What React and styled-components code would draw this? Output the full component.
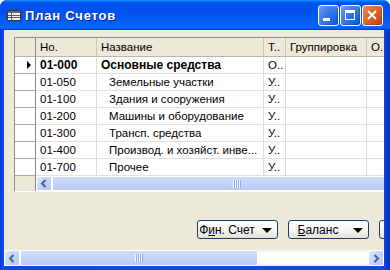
import React from 'react';
import styled, { createGlobalStyle } from 'styled-components';

const GlobalStyle = createGlobalStyle`
  html, body { margin: 0; padding: 0; overflow: hidden; background: #ffffff; }
  body { font-family: "Liberation Sans", Arial, sans-serif; }
  #root { width: 390px; height: 270px; }
`;

const Window = styled.div`
  width: 390px;
  height: 270px;
  box-sizing: border-box;
  display: flex;
  flex-direction: column;
  padding-bottom: 4px;
  background: linear-gradient(90deg, #0831d9 0px, #0a4be8 2px, #0a4ee8 380px, #0841d8 386px, #062fb8 390px);
  border-radius: 7px 7px 0 0;
  overflow: hidden;
`;

const TitleBar = styled.div`
  height: 30px;
  flex: none;
  display: flex;
  align-items: center;
  padding: 0 7px 0 7px;
  box-sizing: border-box;
  background: linear-gradient(180deg, #0997ff 0%, #0053ee 9%, #0050ee 40%, #0663f6 86%, #0666f8 92%, #005bff 95%, #003dd7 97%, #003dd7 100%);
  color: #ffffff;
`;

const TitleIcon = styled.svg`
  width: 14px;
  height: 11px;
  flex: none;
  margin-top: 1px;
`;

const TitleText = styled.div`
  margin-left: 4px;
  font-family: "Liberation Sans", Arial, sans-serif;
  font-weight: bold;
  font-size: 13px;
  letter-spacing: 0.8px;
  text-shadow: 1px 1px 0 #0a1f8a;
  flex: 1;
`;

const Controls = styled.div`
  display: flex;
  gap: 1px;
  align-self: flex-start;
  margin-top: 5px;
`;

const CtlButton = styled.div`
  width: 21px;
  height: 21px;
  box-sizing: border-box;
  border: 1px solid #ffffff;
  border-radius: 3px;
  display: flex;
  align-items: center;
  justify-content: center;
  background: ${p => p.$close
    ? 'radial-gradient(circle at 90% 90%, #cc4616 0%, #dc6527 55%, #e5906c 100%)'
    : 'radial-gradient(circle at 90% 90%, #0a5cf0 0%, #3a78ea 55%, #6aa0fb 100%)'};
  box-shadow: inset -1px -1px 1px rgba(0,0,0,0.2);
`;

const Body = styled.div`
  flex: 1;
  min-height: 0;
  margin: 0 6px 0 4px;
  background: #ece9d8;
  display: flex;
  flex-direction: column;
  overflow: hidden;
`;

const Form = styled.div`
  flex: 1;
  min-height: 0;
  padding: 7px 0 0 10px;
  overflow: hidden;
  display: flex;
  flex-direction: column;
`;

const Grid = styled.div`
  flex: none;
  width: 398px;
  border-top: 1px solid #8e8d88;
  border-left: 1px solid #8e8d88;
  border-bottom: 1px solid #ffffff;
  background: #ece9d8;
  font-size: 11.5px;
  color: #000;
`;

const COLS = '21px 61px 167px 22px 81px 45px';

const Row = styled.div`
  display: grid;
  grid-template-columns: ${COLS};
  height: ${p => (p.$header ? 19 : 17)}px;
`;

const Cell = styled.div`
  box-sizing: border-box;
  padding-left: ${p => 4 + (p.$indent || 0)}px;
  border-right: 1px solid ${p => (p.$header ? '#cbc7b8' : '#dedcd3')};
  border-bottom: 1px solid ${p => (p.$header ? '#b9b6a8' : '#e2e0d8')};
  background: ${p => (p.$header ? '#ece9d8' : '#ffffff')};
  font-weight: ${p => (p.$bold ? 'bold' : 'normal')};
  font-size: ${p => (p.$bold ? 12 : 11.5)}px;
  line-height: ${p => (p.$header ? 18 : 16)}px;
  white-space: nowrap;
  overflow: hidden;
`;

const Selector = styled.div`
  box-sizing: border-box;
  background: ${p => (p.$header ? '#ece9d8' : '#ffffff')};
  border-right: 1px solid #8a8985;
  border-bottom: 1px solid ${p => (p.$header ? '#b9b6a8' : '#a9a8a3')};
  display: flex;
  align-items: center;
  justify-content: flex-end;
  padding-right: 4px;
`;

const Pointer = styled.div`
  width: 0;
  height: 0;
  border-top: 4px solid transparent;
  border-bottom: 4px solid transparent;
  border-left: 4px solid #000;
`;

const GridScroll = styled.div`
  display: grid;
  grid-template-columns: 21px 1fr;
  height: 15px;
`;

const Corner = styled.div`
  background: #ece9d8;
  border-right: 1px solid #8a8985;
`;

const ScrollBar = styled.div`
  display: flex;
  height: ${p => p.$h}px;
  background: linear-gradient(180deg, #f3f1ec 0%, #fefefb 20%, #fefefb 80%, #f0eee5 100%);
  overflow: hidden;
  flex: none;
`;

const Arrow = styled.div`
  width: ${p => p.$w}px;
  flex: none;
  box-sizing: border-box;
  border: 1px solid #ffffff;
  border-radius: 2px;
  background: linear-gradient(135deg, #dfe8fe 0%, #c4d5fd 50%, #b3c8f5 100%);
  display: flex;
  align-items: center;
  justify-content: center;
`;

const Thumb = styled.div`
  width: ${p => p.$w}px;
  flex: none;
  box-sizing: border-box;
  border: 1px solid #ffffff;
  border-radius: 2px;
  background: linear-gradient(180deg, #cddbfd 0%, #c5d5fc 50%, #b8cbf6 100%);
  display: flex;
  align-items: center;
  justify-content: center;
`;

const Grip = styled.div`
  width: 8px;
  height: 8px;
  background: repeating-linear-gradient(90deg, #eef3fe 0px, #eef3fe 1px, #8fadec 1px, #8fadec 2px);
`;

const Track = styled.div`
  flex: 1;
`;

const ButtonRow = styled.div`
  display: flex;
  gap: 10px;
  margin: 28px 0 0 183px;
`;

const DropButton = styled.div`
  flex: none;
  width: 81px;
  height: 19px;
  box-sizing: border-box;
  border: 1px solid #1c3f73;
  border-radius: 3px;
  background: linear-gradient(180deg, #ffffff 0%, #f4f3ee 60%, #e3e0d4 100%);
  display: flex;
  align-items: center;
  font-size: 12px;
  color: #000;
`;

const ButtonLabel = styled.div`
  flex: 1;
  text-align: center;
  line-height: 16px;
  white-space: nowrap;
  u { text-decoration: underline; text-underline-offset: 1px; }
`;

const DropArrow = styled.div`
  width: 0;
  height: 0;
  margin: 2px 5px 0 6px;
  border-left: 5px solid transparent;
  border-right: 5px solid transparent;
  border-top: 5px solid #000;
`;

const Chevron = ({ dir }) => (
  <svg width="8" height="9" viewBox="0 0 8 9">
    {dir === 'left'
      ? <path d="M5.5 1 L2 4.5 L5.5 8" fill="none" stroke="#4d6185" strokeWidth="2" />
      : <path d="M2.5 1 L6 4.5 L2.5 8" fill="none" stroke="#4d6185" strokeWidth="2" />}
  </svg>
);

const rows = [
  { no: '01-000', name: 'Основные средства', t: 'О..', bold: true, current: true },
  { no: '01-050', name: 'Земельные участки', t: 'У..', indent: 8 },
  { no: '01-100', name: 'Здания и сооружения', t: 'У..', indent: 8 },
  { no: '01-200', name: 'Машины и оборудование', t: 'У..', indent: 8 },
  { no: '01-300', name: 'Трансп. средства', t: 'У..', indent: 8 },
  { no: '01-400', name: 'Производ. и хозяйст. инве...', t: 'У..', indent: 8 },
  { no: '01-700', name: 'Прочее', t: 'У..', indent: 8 },
];

export default function App() {
  return (
    <>
      <GlobalStyle />
      <Window>
        <TitleBar>
          <TitleIcon viewBox="0 0 14 11">
            <rect x="0.5" y="0.5" width="13" height="10" fill="#f4f1e6" stroke="#3a3a3a" />
            <rect x="1" y="1" width="12" height="2" fill="#6b6b6b" />
            <path d="M1 5.5 H13 M1 7.5 H13 M4.5 3 V10" stroke="#5a5a5a" strokeWidth="1" />
          </TitleIcon>
          <TitleText>План Счетов</TitleText>
          <Controls>
            <CtlButton>
              <svg width="19" height="19" viewBox="0 0 19 19">
                <rect x="4" y="12" width="7" height="3" fill="#ffffff" />
              </svg>
            </CtlButton>
            <CtlButton>
              <svg width="19" height="19" viewBox="0 0 19 19">
                <rect x="4.5" y="4.5" width="9" height="9" fill="none" stroke="#ffffff" />
                <rect x="4" y="4" width="10" height="3" fill="#ffffff" />
              </svg>
            </CtlButton>
            <CtlButton $close>
              <svg width="19" height="19" viewBox="0 0 19 19">
                <path d="M5 5 L13 13 M13 5 L5 13" stroke="#ffffff" strokeWidth="2" />
              </svg>
            </CtlButton>
          </Controls>
        </TitleBar>
        <Body>
          <Form>
            <Grid>
              <Row $header>
                <Selector $header />
                <Cell $header>Но.</Cell>
                <Cell $header>Название</Cell>
                <Cell $header>Т..</Cell>
                <Cell $header>Группировка</Cell>
                <Cell $header>О.</Cell>
              </Row>
              {rows.map(r => (
                <Row key={r.no}>
                  <Selector>{r.current && <Pointer />}</Selector>
                  <Cell $bold={r.bold}>{r.no}</Cell>
                  <Cell $bold={r.bold} $indent={r.indent}>{r.name}</Cell>
                  <Cell>{r.t}</Cell>
                  <Cell />
                  <Cell />
                </Row>
              ))}
              <GridScroll>
                <Corner />
                <ScrollBar $h={15}>
                  <Arrow $w={16}><Chevron dir="left" /></Arrow>
                  <Thumb $w={370}><Grip /></Thumb>
                </ScrollBar>
              </GridScroll>
            </Grid>
            <ButtonRow>
              <DropButton>
                <ButtonLabel>Ф<u>и</u>н. Счет</ButtonLabel>
                <DropArrow />
              </DropButton>
              <DropButton>
                <ButtonLabel><u>Б</u>аланс</ButtonLabel>
                <DropArrow />
              </DropButton>
              <DropButton>
                <ButtonLabel />
                <DropArrow />
              </DropButton>
            </ButtonRow>
          </Form>
          <ScrollBar $h={16}>
            <Arrow $w={16}><Chevron dir="left" /></Arrow>
            <Thumb $w={238}><Grip /></Thumb>
            <Track />
            <Arrow $w={16}><Chevron dir="right" /></Arrow>
          </ScrollBar>
        </Body>
      </Window>
    </>
  );
}
